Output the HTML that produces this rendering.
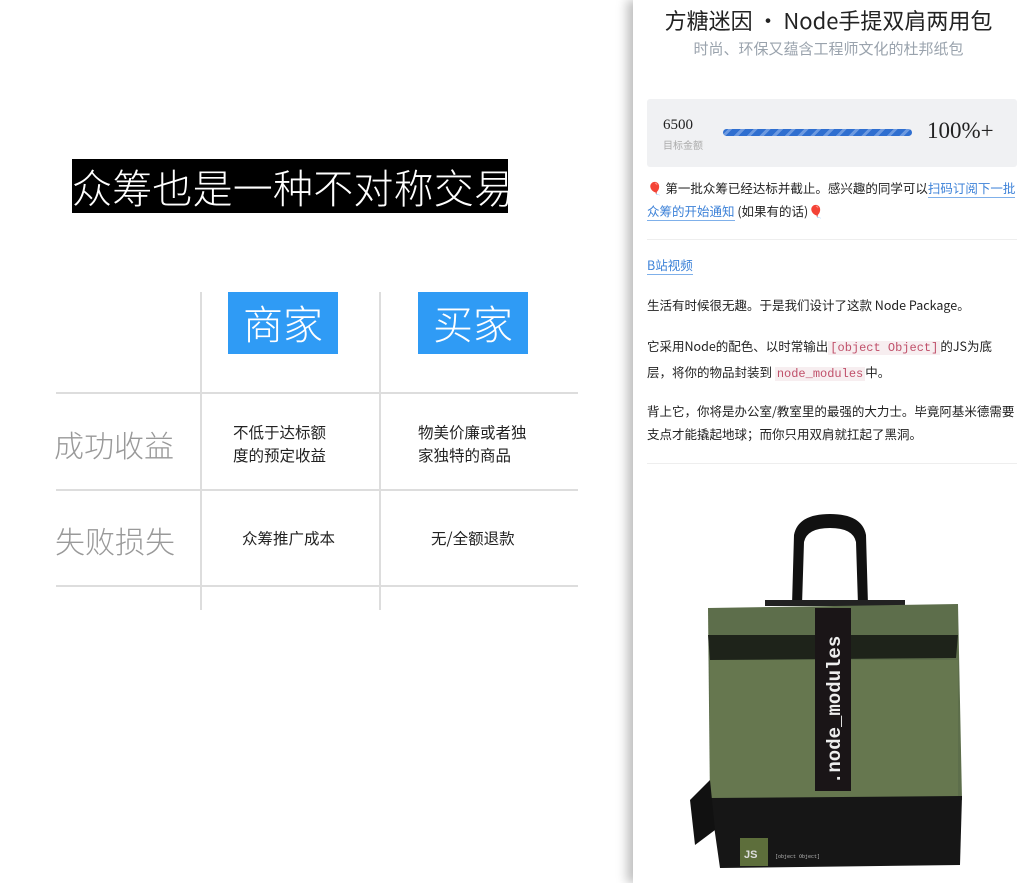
<!DOCTYPE html>
<html><head><meta charset="utf-8"><style>
*{margin:0;padding:0;box-sizing:border-box}
body{width:1024px;height:883px;background:#fff;position:relative;overflow:hidden;font-family:"Liberation Sans","Noto Sans CJK SC",sans-serif}
.a{position:absolute}
.cj{font-family:"Noto Sans CJK SC",sans-serif}
.title{left:72px;top:159px;width:436px;height:54px;background:#000;color:#fff;font-size:40px;font-weight:300;line-height:54px;white-space:nowrap;letter-spacing:0.2px}
.vl{width:2px;background:#ddd}
.hl{height:2px;background:#ddd;left:56px;width:522px}
.btn{background:#2f9bf5;color:#fff;font-size:40px;font-weight:300;text-align:center;line-height:60px;height:62px;width:110px;top:292px}
.row{color:#999;font-size:30px;font-weight:300}
.cell{font-size:15.5px;color:#222;line-height:23px}
.panel{left:633px;top:0;width:391px;height:883px;background:#fff;box-shadow:-6px 0 10px rgba(0,0,0,0.25)}
.p{font-size:12.5px;color:#222;line-height:23px;white-space:nowrap}
code{font-family:"Liberation Mono",monospace;color:#c0506a;background:#f7eef0;font-size:12px;padding:0 2px}
a{color:#3d82d8;text-decoration:none;border-bottom:1px solid #7fb0ea}
</style></head><body>
<div class="a title cj">众筹也是一种不对称交易</div>
<div class="a vl" style="left:200px;top:292px;height:318px"></div>
<div class="a vl" style="left:379px;top:292px;height:318px"></div>
<div class="a hl" style="top:392px"></div>
<div class="a hl" style="top:489px"></div>
<div class="a hl" style="top:585px"></div>
<div class="a btn cj" style="left:228px">商家</div>
<div class="a btn cj" style="left:418px">买家</div>
<div class="a row cj" style="left:54px;top:422px">成功收益</div>
<div class="a row cj" style="left:55px;top:518px">失败损失</div>
<div class="a cell cj" style="left:233px;top:421px">不低于达标额<br>度的预定收益</div>
<div class="a cell cj" style="left:418px;top:421px">物美价廉或者独<br>家独特的商品</div>
<div class="a cell cj" style="left:242px;top:527px">众筹推广成本</div>
<div class="a cell cj" style="left:431px;top:527px">无/全额退款</div>

<div class="a panel">
<div class="a cj" style="left:0;width:391px;top:4px;text-align:center;font-size:22px;color:#222;white-space:nowrap">方糖迷因&thinsp;·&thinsp;Node手提双肩两用包</div>
<div class="a cj" style="left:0;width:391px;top:38px;text-align:center;font-size:15px;color:#9aa3ad">时尚、环保又蕴含工程师文化的杜邦纸包</div>
<div class="a" style="left:14px;top:99px;width:370px;height:68px;background:#f0f1f3;border-radius:3px">
 <div class="a" style="left:16px;top:18px;font-family:'Liberation Serif',serif;font-size:15px;color:#222">6500</div>
 <div class="a cj" style="left:16px;top:38px;font-size:10px;color:#aaa">目标金额</div>
 <div class="a" style="left:76px;top:30px;width:189px;height:7px;border-radius:4px;background:repeating-linear-gradient(-45deg,#2f6fd0 0 6px,#6d9ae0 6px 9px)"></div>
 <div class="a" style="left:280px;top:19px;font-family:'Liberation Serif',serif;font-size:23px;color:#222">100%+</div>
</div>
<div class="a p cj" style="left:14px;top:176px">🎈 第一批众筹已经达标并截止。感兴趣的同学可以<a>扫码订阅下一批</a><br><a>众筹的开始通知</a> (如果有的话)🎈</div>
<div class="a" style="left:14px;top:239px;width:370px;height:1px;background:#eee"></div>
<div class="a p cj" style="left:14px;top:253px"><a>B站视频</a></div>
<div class="a p cj" style="left:14px;top:293px">生活有时候很无趣。于是我们设计了这款 Node Package。</div>
<div class="a p cj" style="left:14px;top:334px">它采用Node的配色、以时常输出<code>[object Object]</code>的JS为底<br>层，将你的物品封装到 <code>node_modules</code>中。</div>
<div class="a p cj" style="left:14px;top:399px">背上它，你将是办公室/教室里的最强的大力士。毕竟阿基米德需要<br>支点才能撬起地球；而你只用双肩就扛起了黑洞。</div>
<div class="a" style="left:14px;top:463px;width:370px;height:1px;background:#eee"></div>
<svg class="a" style="left:47px;top:500px" width="300" height="383" viewBox="0 0 300 383">
 <path d="M112 105 L114 35 Q118 14 150 14 Q182 14 186 35 L188 105 L178 105 L176 42 Q173 28 150 28 Q127 28 124 42 L122 105Z" fill="#111"/>
 <rect x="85" y="100" width="140" height="6" fill="#222"/>
 <path d="M28 108 L278 104 L282 300 L30 302Z" fill="#5d6e4b"/>
 <path d="M28 135 L278 135 L276 158 L30 160Z" fill="#1e231a"/>
 <rect x="30" y="160" width="248" height="140" fill="#66774f"/>
 <path d="M30 298 L282 296 L280 365 L40 368 Z" fill="#161616"/>
 <path d="M10 300 L30 280 L35 330 L15 345 Z" fill="#111"/>
 <rect x="135" y="108" width="36" height="183" fill="#1a1517"/>
 <text transform="translate(160 284) rotate(-90)" font-family="Liberation Mono,monospace" font-size="19" font-weight="bold" fill="#eee">.node_modules</text>
 <rect x="60" y="338" width="28" height="28" fill="#5d6e3b"/>
 <text x="64" y="358" font-family="Liberation Sans,sans-serif" font-size="11" font-weight="bold" fill="#ddd">JS</text>
 <text x="95" y="358" font-family="Liberation Mono,monospace" font-size="5" fill="#bbb">[object Object]</text>
</svg>
</div>
</body></html>
